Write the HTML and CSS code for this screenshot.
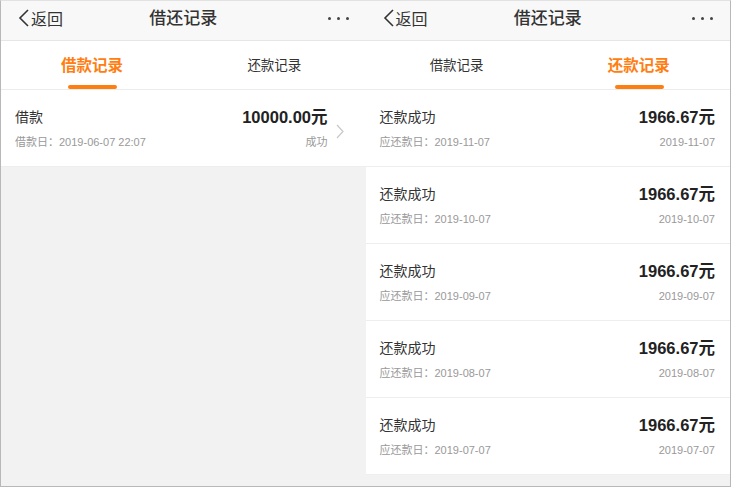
FILE: index.html
```html
<!DOCTYPE html>
<html lang="zh-CN">
<head>
    <meta charset="UTF-8">
    <meta name="viewport" content="width=device-width, initial-scale=1.0">
    <title>借还记录</title>
    <link rel="stylesheet" href="styles.css">
</head>
<body>
    <div class="frame">
        <!-- 借款记录 -->
        <div class="panel">
            <div class="nav">
                <div class="back">
                    <svg class="back-icon" width="13" height="18" viewBox="0 0 13 18"><path d="M11 1L3 9l8 8" fill="none" stroke="#333" stroke-width="1.6"/></svg>
                    <span>返回</span>
                </div>
                <div class="nav-title">借还记录</div>
                <div class="more"><i></i><i></i><i></i></div>
            </div>
            <div class="tabs">
                <div class="tab active">借款记录</div>
                <div class="tab">还款记录</div>
            </div>
            <div class="list">
                <div class="row loan">
                    <div class="row-left">
                        <div class="row-title">借款</div>
                        <div class="row-sub">借款日：2019-06-07 22:07</div>
                    </div>
                    <div class="row-right">
                        <div class="amount">10000.00元</div>
                        <div class="row-sub">成功</div>
                    </div>
                    <svg class="arrow" width="8" height="15" viewBox="0 0 8 15"><path d="M1 1l6 6.5L1 14" fill="none" stroke="#c7c7c7" stroke-width="1.2"/></svg>
                </div>
            </div>
        </div>

        <!-- 还款记录 -->
        <div class="panel">
            <div class="nav">
                <div class="back">
                    <svg class="back-icon" width="13" height="18" viewBox="0 0 13 18"><path d="M11 1L3 9l8 8" fill="none" stroke="#333" stroke-width="1.6"/></svg>
                    <span>返回</span>
                </div>
                <div class="nav-title">借还记录</div>
                <div class="more"><i></i><i></i><i></i></div>
            </div>
            <div class="tabs">
                <div class="tab">借款记录</div>
                <div class="tab active">还款记录</div>
            </div>
            <div class="list">
                <div class="row">
                    <div class="row-left">
                        <div class="row-title">还款成功</div>
                        <div class="row-sub">应还款日：2019-11-07</div>
                    </div>
                    <div class="row-right">
                        <div class="amount">1966.67元</div>
                        <div class="row-sub">2019-11-07</div>
                    </div>
                </div>
                <div class="row">
                    <div class="row-left">
                        <div class="row-title">还款成功</div>
                        <div class="row-sub">应还款日：2019-10-07</div>
                    </div>
                    <div class="row-right">
                        <div class="amount">1966.67元</div>
                        <div class="row-sub">2019-10-07</div>
                    </div>
                </div>
                <div class="row">
                    <div class="row-left">
                        <div class="row-title">还款成功</div>
                        <div class="row-sub">应还款日：2019-09-07</div>
                    </div>
                    <div class="row-right">
                        <div class="amount">1966.67元</div>
                        <div class="row-sub">2019-09-07</div>
                    </div>
                </div>
                <div class="row">
                    <div class="row-left">
                        <div class="row-title">还款成功</div>
                        <div class="row-sub">应还款日：2019-08-07</div>
                    </div>
                    <div class="row-right">
                        <div class="amount">1966.67元</div>
                        <div class="row-sub">2019-08-07</div>
                    </div>
                </div>
                <div class="row">
                    <div class="row-left">
                        <div class="row-title">还款成功</div>
                        <div class="row-sub">应还款日：2019-07-07</div>
                    </div>
                    <div class="row-right">
                        <div class="amount">1966.67元</div>
                        <div class="row-sub">2019-07-07</div>
                    </div>
                </div>
            </div>
        </div>
    </div>
</body>
</html>
```

FILE: styles.css
```css
* {
    box-sizing: border-box;
}
body {
    margin: 0;
    font-family: "Liberation Sans", "Noto Sans CJK SC", sans-serif;
    color: #333;
    background-color: #fff;
}
.frame {
    width: 731px;
    height: 487px;
    display: flex;
    border: 1px solid #b8b8b8;
    border-top-color: #e2e2e2;
    overflow: hidden;
}
.panel {
    flex: 1;
    display: flex;
    flex-direction: column;
    background-color: #f2f2f2;
}
.nav {
    height: 40px;
    display: flex;
    align-items: center;
    justify-content: space-between;
    padding: 0 17px 5px 16px;
    background-color: #f8f8f8;
    border-bottom: 1px solid #e6e6e6;
    position: relative;
}
.back {
    display: flex;
    align-items: center;
    font-size: 16px;
    color: #333;
}
.back-icon {
    margin-right: 1px;
}
.nav-title {
    position: absolute;
    left: 0;
    right: 0;
    top: 6px;
    line-height: 24px;
    text-align: center;
    font-size: 17px;
    font-weight: 500;
    color: #333;
    pointer-events: none;
}
.more {
    display: flex;
    gap: 6px;
}
.more i {
    width: 3px;
    height: 3px;
    border-radius: 50%;
    background-color: #444;
}
.tabs {
    height: 49px;
    display: flex;
    background-color: #fff;
    border-bottom: 1px solid #ececec;
}
.tab {
    flex: 1;
    display: flex;
    align-items: center;
    justify-content: center;
    font-size: 13.5px;
    color: #333;
    position: relative;
    padding-bottom: 2px;
}
.tab.active {
    font-size: 15.5px;
    font-weight: bold;
    color: #ff7e12;
}
.tab.active::after {
    content: "";
    position: absolute;
    bottom: 0;
    left: 50%;
    width: 49px;
    height: 4px;
    margin-left: -24px;
    border-radius: 2px;
    background-color: #ff7e12;
}
.list {
    background-color: #fff;
}
.row {
    height: 77px;
    display: flex;
    align-items: flex-start;
    justify-content: space-between;
    padding: 16px 15px 0 14px;
    border-bottom: 1px solid #eeeeee;
}
.row.loan {
    padding-right: 22px;
}
.row-left,
.row-right {
    display: flex;
    flex-direction: column;
}
.row-right {
    align-items: flex-end;
    margin-left: auto;
}
.row-title {
    font-size: 14px;
    line-height: 22px;
    color: #333;
}
.row-sub {
    margin-top: 6px;
    font-size: 11px;
    line-height: 16px;
    color: #999;
}
.amount {
    font-size: 16.5px;
    font-weight: bold;
    line-height: 22px;
    color: #222;
}
.arrow {
    margin: 18px 0 0 8px;
}
```
